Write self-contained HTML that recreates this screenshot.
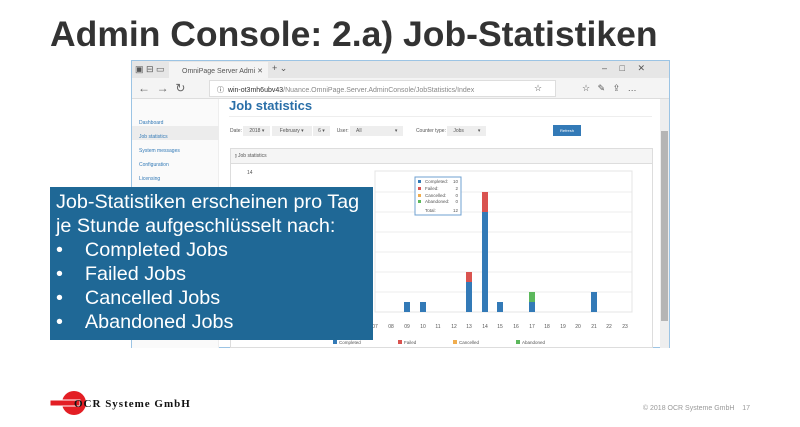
<!DOCTYPE html><html><head><meta charset="utf-8"><style>
*{margin:0;padding:0;box-sizing:border-box}
body{width:800px;height:427px;background:#fff;font-family:"Liberation Sans",sans-serif;position:relative;overflow:hidden}
.a{position:absolute}
.t{font-size:9px;color:#555}
.s{font-size:5px;color:#555}
</style></head><body>
<div class="a" style="left:50px;top:14px;font-size:35.5px;font-weight:bold;color:#333">Admin Console: 2.a) Job-Statistiken</div>
<div class="a" style="left:131px;top:60px;width:539px;height:288px;border:1px solid #9cc4e4;background:#fff">
 <div class="a" style="left:0;top:0;width:537px;height:17px;background:#e6e6e6"></div>
 <div class="a" style="left:37px;top:1px;width:99px;height:16px;background:#f4f4f4"></div>
 <div class="a t" style="left:3px;top:3px">▣ ⊟ ▭</div>
 <div class="a s" style="left:50px;top:6px;font-size:7px">OmniPage Server Admi ✕</div>
 <div class="a t" style="left:140px;top:2px">+ ⌄</div>
 <div class="a t" style="left:470px;top:2px">–&nbsp;&nbsp;&nbsp;&nbsp;&nbsp;□&nbsp;&nbsp;&nbsp;&nbsp;&nbsp;✕</div>
 <div class="a" style="left:0;top:17px;width:537px;height:21px;background:#f4f4f4;border-bottom:1px solid #ddd"></div>
 <div class="a t" style="left:6px;top:20px;font-size:12px;color:#666">←&nbsp;&nbsp;→&nbsp;&nbsp;↻</div>
 <div class="a" style="left:77px;top:19px;width:347px;height:17px;background:#fff;border:1px solid #ddd"></div>
 <div class="a" style="left:85px;top:24px;font-size:7px;color:#333">ⓘ&nbsp;&nbsp;win-ot3mh6ubv43<span style="color:#888">/Nuance.OmniPage.Server.AdminConsole/JobStatistics/Index</span></div>
 <div class="a t" style="left:402px;top:22px">☆</div>
 <div class="a t" style="left:450px;top:22px">☆&nbsp;&nbsp;&nbsp;✎&nbsp;&nbsp;&nbsp;⇪&nbsp;&nbsp;&nbsp;…</div>
 <div class="a" style="left:0;top:38px;width:87px;height:249px;background:#fafafa;border-right:1px solid #eee"></div>
 <div class="a" style="left:0;top:65px;width:87px;height:14px;background:#ececec"></div>
 <div class="a" style="left:7px;top:55px;font-size:5px;color:#337ab7;line-height:14px">Dashboard<br>Job statistics<br>System messages<br>Configuration<br>Licensing</div>
 <div class="a" style="left:97px;top:37px;font-size:13px;font-weight:bold;color:#2a6fa8">Job statistics</div>
 <div class="a" style="left:97px;top:55px;width:423px;height:1px;background:#eee"></div>
 <div class="a s" style="left:98px;top:67px">Date: <span style="background:#eee;padding:2px 6px">2018 ▾</span> <span style="background:#eee;padding:2px 8px">February ▾</span> <span style="background:#eee;padding:2px 5px">6 ▾</span>&nbsp;&nbsp;&nbsp;&nbsp;&nbsp;User: <span style="background:#eee;padding:2px 6px">All&nbsp;&nbsp;&nbsp;&nbsp;&nbsp;&nbsp;&nbsp;&nbsp;&nbsp;&nbsp;&nbsp;&nbsp;&nbsp;&nbsp;&nbsp;&nbsp;&nbsp;&nbsp;&nbsp;&nbsp;&nbsp;&nbsp;&nbsp;&nbsp;▾</span>&nbsp;&nbsp;&nbsp;&nbsp;&nbsp;&nbsp;&nbsp;&nbsp;&nbsp;Counter type: <span style="background:#eee;padding:2px 6px">Jobs&nbsp;&nbsp;&nbsp;&nbsp;&nbsp;&nbsp;&nbsp;&nbsp;&nbsp;&nbsp;▾</span></div>
 <div class="a" style="left:421px;top:64px;width:28px;height:11px;background:#337ab7;color:#fff;font-size:4px;text-align:center;line-height:11px">Refresh</div>
 <div class="a" style="left:98px;top:87px;width:423px;height:200px;border:1px solid #ddd"></div>
 <div class="a" style="left:99px;top:88px;width:421px;height:15px;background:#f5f5f5;border-bottom:1px solid #ddd"></div>
 <div class="a s" style="left:103px;top:92px">⫾ Job statistics</div>
 <div class="a" style="left:528px;top:38px;width:9px;height:249px;background:#eee"></div>
 <div class="a" style="left:529px;top:70px;width:7px;height:190px;background:#b5b5b5"></div>
</div>
<svg class="a" style="left:0;top:0" width="800" height="427">
 <g stroke="#eee" stroke-width="1"><line x1="375" y1="192" x2="632" y2="192"/><line x1="375" y1="212" x2="632" y2="212"/><line x1="375" y1="232" x2="632" y2="232"/><line x1="375" y1="252" x2="632" y2="252"/><line x1="375" y1="272" x2="632" y2="272"/><line x1="375" y1="292" x2="632" y2="292"/></g>
 <rect x="375" y="171" width="257" height="141" fill="none" stroke="#e4e4e4"/>
 <text x="247" y="174" font-size="5" fill="#555" font-family="Liberation Sans">14</text>
 <g fill="#337ab7"><rect x="404" y="302" width="6" height="10"/><rect x="420" y="302" width="6" height="10"/><rect x="466" y="282" width="6" height="30"/><rect x="482" y="212" width="6" height="100"/><rect x="497" y="302" width="6" height="10"/><rect x="529" y="302" width="6" height="10"/><rect x="591" y="292" width="6" height="20"/></g>
 <rect x="466" y="272" width="6" height="10" fill="#d9534f"/><rect x="482" y="192" width="6" height="20" fill="#d9534f"/><rect x="529" y="292" width="6" height="10" fill="#5cb85c"/>
 <g font-size="5" fill="#555" font-family="Liberation Sans" text-anchor="middle"><text x="375" y="328">07</text><text x="391" y="328">08</text><text x="407" y="328">09</text><text x="423" y="328">10</text><text x="438" y="328">11</text><text x="454" y="328">12</text><text x="469" y="328">13</text><text x="485" y="328">14</text><text x="500" y="328">15</text><text x="516" y="328">16</text><text x="532" y="328">17</text><text x="547" y="328">18</text><text x="563" y="328">19</text><text x="578" y="328">20</text><text x="594" y="328">21</text><text x="609" y="328">22</text><text x="625" y="328">23</text></g>
 <g font-size="4.5" fill="#555" font-family="Liberation Sans"><rect x="333" y="340" width="4" height="4" fill="#337ab7"/><text x="339" y="344">Completed</text><rect x="398" y="340" width="4" height="4" fill="#d9534f"/><text x="404" y="344">Failed</text><rect x="453" y="340" width="4" height="4" fill="#f0ad4e"/><text x="459" y="344">Cancelled</text><rect x="516" y="340" width="4" height="4" fill="#5cb85c"/><text x="522" y="344">Abandoned</text></g>
 <rect x="415" y="177" width="46" height="38" fill="#fff" stroke="#6fa0d0"/>
 <g font-size="4.5" fill="#555" font-family="Liberation Sans"><rect x="418" y="180" width="3" height="3" fill="#337ab7"/><text x="425" y="183">Completed:</text><text x="458" y="183" text-anchor="end">10</text><rect x="418" y="187" width="3" height="3" fill="#d9534f"/><text x="425" y="190">Failed:</text><text x="458" y="190" text-anchor="end">2</text><rect x="418" y="194" width="3" height="3" fill="#f0ad4e"/><text x="425" y="197">Cancelled:</text><text x="458" y="197" text-anchor="end">0</text><rect x="418" y="200" width="3" height="3" fill="#5cb85c"/><text x="425" y="203">Abandoned:</text><text x="458" y="203" text-anchor="end">0</text><text x="425" y="212">Total:</text><text x="458" y="212" text-anchor="end">12</text></g>
 <circle cx="74" cy="403" r="12" fill="#e31e24"/><rect x="50" y="400" width="30" height="6" fill="#e31e24" stroke="#fff" stroke-width="1"/>
 <text x="74" y="407" font-size="11" font-weight="bold" font-family="Liberation Serif" fill="#111" letter-spacing="1">OCR Systeme GmbH</text>
 <text x="750" y="410" font-size="7" fill="#999" font-family="Liberation Sans" text-anchor="end">© 2018 OCR Systeme GmbH&#160;&#160;&#160;&#160;17</text>
</svg>
<div class="a" style="left:50px;top:187px;width:323px;height:153px;background:#1f6896;color:#fff;font-size:19.8px;line-height:24px;padding:3px 0 0 6px;white-space:nowrap">
Job-Statistiken erscheinen pro Tag<br>je Stunde aufgeschlüsselt nach:<br>
•&nbsp;&nbsp;&nbsp;&nbsp;Completed Jobs<br>•&nbsp;&nbsp;&nbsp;&nbsp;Failed Jobs<br>•&nbsp;&nbsp;&nbsp;&nbsp;Cancelled Jobs<br>•&nbsp;&nbsp;&nbsp;&nbsp;Abandoned Jobs</div>
</body></html>
